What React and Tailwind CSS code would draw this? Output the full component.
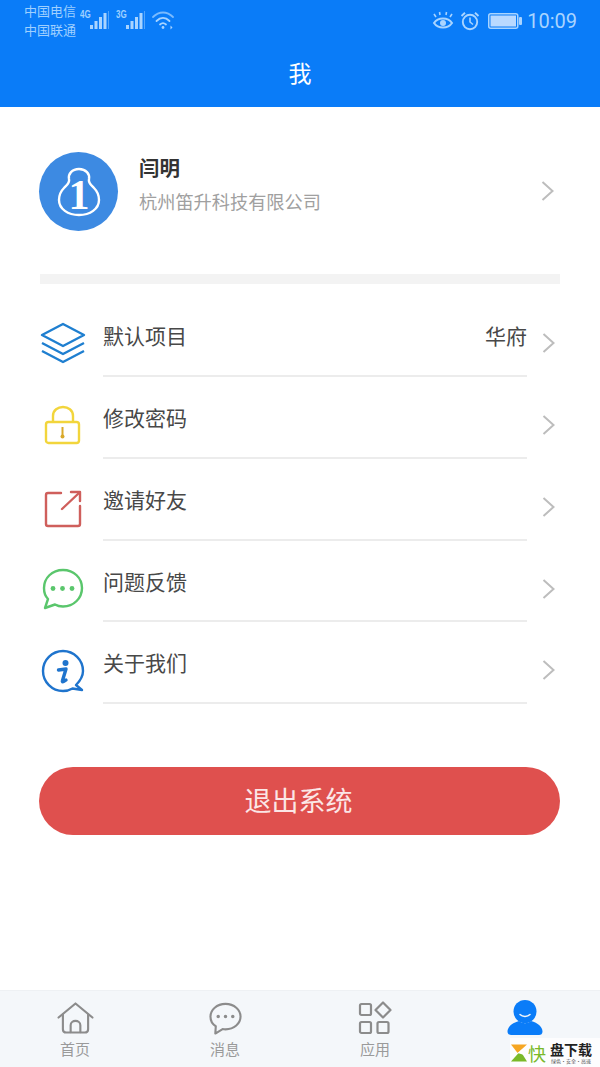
const cjk = { fontFamily: '"Noto Sans CJK SC", "Noto Sans", sans-serif' };

function Signal({ label }) {
  return (
    <div className="relative w-[30px] h-[30px]">
      <span className="absolute left-0 top-[10px] text-[10px] leading-[10px] font-bold text-[#9fd0ff]" style={{ fontFamily: '"Liberation Sans", sans-serif', transform: 'scaleX(0.8)', transformOrigin: 'left' }}>{label}</span>
      <svg className="absolute left-[10px] top-[11px]" width="20" height="20" viewBox="0 0 20 20" fill="#a9d4ff">
        <rect x="0" y="14" width="3" height="4" />
        <rect x="4.5" y="10" width="3" height="8" />
        <rect x="9" y="6" width="3" height="12" />
        <rect x="13.5" y="2" width="3" height="16" />
        <rect x="18" y="0" width="1" height="18" opacity="0.45" />
      </svg>
    </div>
  );
}

function StatusBar() {
  return (
    <div className="h-[42px] flex items-start justify-between pl-6 pr-[23px] text-[#9fd0ff]">
      <div className="flex items-start">
        <div className="text-[13px] leading-[19px] pt-[1px] w-[56px]">
          <div>中国电信</div>
          <div>中国联通</div>
        </div>
        <div className="flex gap-[6px]">
          <Signal label="4G" />
          <Signal label="3G" />
        </div>
        <svg className="ml-[5px] mt-[10px]" width="24" height="20" viewBox="0 0 24 20" fill="none" stroke="#a9d4ff" strokeWidth="1.8" strokeLinecap="round">
          <path d="M2 7C8 1 16 1 22 7" opacity="0.7" />
          <path d="M5.5 11C9.5 7 14.5 7 18.5 11" />
          <path d="M9 14.5C10.8 12.8 13.2 12.8 15 14.5" />
          <circle cx="12" cy="17.5" r="1.4" fill="#a9d4ff" stroke="none" />
          <path d="M19.5 15.5l2 2-2 2z" fill="#a9d4ff" stroke="none" />
        </svg>
      </div>
      <div className="flex items-center mt-[8px] h-[26px]">
        <svg width="22" height="20" viewBox="0 0 22 20" fill="none" stroke="#a9d4ff" strokeWidth="2">
          <path d="M2 12C6 6 16 6 20 12C16 18 6 18 2 12Z" />
          <circle cx="11" cy="12" r="3" fill="#a9d4ff" stroke="none" />
          <path d="M4 6L2 3M8 4L7.5 1M14 4L14.5 1M18 6L20 3" strokeWidth="1.6" />
        </svg>
        <svg className="ml-[6px]" width="20" height="20" viewBox="0 0 20 20" fill="none" stroke="#a9d4ff" strokeWidth="1.9">
          <circle cx="10" cy="11" r="7.2" />
          <path d="M10 6.5V11L13 13.5" strokeWidth="1.6" />
          <path d="M1.5 5L5 1.8M18.5 5L15 1.8" />
        </svg>
        <svg className="ml-[8px]" width="34" height="16" viewBox="0 0 34 16">
          <rect x="0.75" y="0.75" width="29" height="14.5" rx="2" fill="none" stroke="#a9d4ff" strokeWidth="1.5" />
          <rect x="2.5" y="2.5" width="25.5" height="11" fill="#b9d9ff" />
          <rect x="31" y="4" width="3" height="8" rx="1" fill="#a9d4ff" />
        </svg>
        <span className="ml-[5px] text-[20px] leading-none text-[#a9d4ff]" style={{ fontFamily: '"Roboto", sans-serif' }}>10:09</span>
      </div>
    </div>
  );
}

const Chevron = () => (
  <svg width="14" height="22" viewBox="0 0 14 22" fill="none" stroke="#bdbdbd" strokeWidth="2" className="shrink-0">
    <path d="M2.5 2L12.5 11L2.5 20" />
  </svg>
);

const LayersIcon = () => (
  <svg width="46" height="42" viewBox="0 0 46 42" fill="none" stroke="#1f7fd0" strokeWidth="2.4" strokeLinejoin="round">
    <path d="M23 2L44 13L23 24L2 13Z" />
    <path d="M2 21L23 32L44 21" />
    <path d="M2 29L23 40L44 29" />
  </svg>
);

const LockIcon = () => (
  <svg width="38" height="42" viewBox="0 0 38 42" fill="none" stroke="#f2d53c" strokeWidth="2.4">
    <path d="M9 18V12C9 0 29 0 29 12V18" />
    <rect x="2" y="18" width="33" height="21" rx="2.5" />
    <path d="M18.5 23V31" stroke="#d9a92a" strokeWidth="2" />
    <circle cx="18.5" cy="32.5" r="2" fill="#d9a92a" stroke="none" />
  </svg>
);

const ShareIcon = () => (
  <svg className="mt-[4px]" width="38" height="38" viewBox="0 0 38 38" fill="none" stroke="#cf5f5c" strokeWidth="2.4" strokeLinecap="round" strokeLinejoin="round">
    <path d="M17 3H4C2.5 3 2 3.5 2 5V34C2 35.5 2.5 36 4 36H34C35.5 36 36 35.5 36 34V16" />
    <path d="M18 19L35 3" />
    <path d="M27 2H36V11" />
  </svg>
);

const ChatIcon = () => (
  <svg width="42" height="42" viewBox="0 0 42 42" fill="none" stroke="#5ac66c" strokeWidth="2.4" strokeLinejoin="round">
    <path d="M21 2C10 2 2 10 2 20C2 25 4 29 6 31L3 40L13 36.5C15.5 38 18 38.5 21 38.5C32 38.5 40 30 40 20C40 10 32 2 21 2Z" />
    <circle cx="11" cy="20.5" r="2.4" fill="#5ac66c" stroke="none" />
    <circle cx="20.5" cy="20.5" r="2.4" fill="#5ac66c" stroke="none" />
    <circle cx="30" cy="20.5" r="2.4" fill="#5ac66c" stroke="none" />
  </svg>
);

const InfoIcon = () => (
  <svg width="44" height="44" viewBox="0 0 44 44" fill="none" stroke="#1f74cd" strokeWidth="2.4" strokeLinejoin="round">
    <path d="M35 36C39 32 42 27.5 42 22C42 11 33 2 22 2C11 2 2 11 2 22C2 33 11 42 22 42C26 42 29 41 31.5 39.5L41 41Z" />
    <circle cx="24.5" cy="14" r="3" fill="#1f74cd" stroke="none" />
    <path d="M17.5 21L25 20L21.5 31.5C21 33 22 33.5 25 31" strokeWidth="3.4" strokeLinecap="round" />
  </svg>
);

const rows = [
  { icon: <LayersIcon />, label: '默认项目', value: '华府', line: 'h-[82px]' },
  { icon: <LockIcon />, label: '修改密码', line: 'h-[82px]' },
  { icon: <ShareIcon />, label: '邀请好友', line: 'h-[82px]' },
  { icon: <ChatIcon />, label: '问题反馈', line: 'h-[81px]' },
  { icon: <InfoIcon />, label: '关于我们', line: 'h-[82px]' },
];

function Row({ icon, label, value, line }) {
  return (
    <div className={`flex ${line} pl-10 pr-[73px]`}>
      <div className="w-[63px] pt-[27px] flex justify-start h-full">
        <div className="w-[46px] flex justify-center items-start">{icon}</div>
      </div>
      <div className="flex-1 border-b-[2px] border-[#ececec] flex items-start pt-[25px] relative">
        <span className="text-[21px] leading-[30px] text-[#484848]">{label}</span>
        {value && <span className="ml-auto text-[21px] leading-[30px] text-[#484848]">{value}</span>}
        <div className="absolute right-[-28px] top-[37px]"><Chevron /></div>
      </div>
    </div>
  );
}

const Tab = ({ icon, label }) => (
  <div className="w-[150px] flex flex-col items-center pt-[9px]">
    <div className="h-[36px] flex items-center justify-center">{icon}</div>
    <span className="mt-[2px] text-[15px] leading-[22px] text-[#9a9a9a]">{label}</span>
  </div>
);

const gray = { fill: 'none', stroke: '#8c8c8c', strokeWidth: 2.2, strokeLinejoin: 'round', strokeLinecap: 'round' };

export default function App() {
  return (
    <div className="w-[600px] h-[1067px] bg-white flex flex-col overflow-hidden relative" style={cjk}>
      <header className="h-[107px] bg-[#0a7cf8] shrink-0">
        <StatusBar />
        <div className="h-[60px] flex items-center justify-center text-white text-[23px]">我</div>
      </header>

      <section className="h-[167px] flex pl-[39px] pr-[46px] pt-[45px] shrink-0">
        <div className="w-[79px] h-[79px] rounded-full bg-[#3d8ae2] flex items-center justify-center">
          <svg className="overflow-visible" width="44" height="50" viewBox="0 0 44 50" fill="none">
            <path d="M22 2C15 2 11 7 12 12C13 16 10 18 7 21C3 25 2 29 2 33C2 42 11 48 22 48C33 48 42 42 42 33C42 29 41 25 37 21C34 18 31 16 32 12C33 7 29 2 22 2Z" stroke="white" strokeWidth="2.4" />
            <text x="22" y="42" textAnchor="middle" fontSize="42" fontWeight="700" fill="white" style={{ fontFamily: '"Liberation Serif", serif' }}>1</text>
          </svg>
        </div>
        <div className="ml-[21px] flex-1">
          <div className="text-[20.5px] leading-[30px] font-bold text-[#333]">闫明</div>
          <div className="mt-[5px] text-[18.2px] leading-[28px] text-[#a0a0a0]">杭州笛升科技有限公司</div>
        </div>
        <div className="mt-[28px]"><Chevron /></div>
      </section>

      <div className="mx-10 h-[10px] bg-[#f3f3f3] shrink-0" />
      <div className="h-[11px] shrink-0" />

      <div className="shrink-0">
        {rows.map((r) => <Row key={r.label} {...r} />)}
      </div>

      <div className="ml-[39px] mr-10 mt-[63px] h-[68px] pb-[2px] pr-[2px] rounded-full bg-[#df504e] flex items-center justify-center text-[27px] text-[#fbe6e6] shrink-0">
        退出系统
      </div>

      <nav className="mt-auto h-[77px] bg-[#f4f7fa] border-t border-[#eef1f4] flex shrink-0">
        <Tab label="首页" icon={
          <svg width="37" height="32" viewBox="0 0 38 33" {...gray}>
            <path d="M1.5 16L19 1.5L36.5 16" />
            <path d="M6 13V28C6 30 7.5 31.5 9.5 31.5H28.5C30.5 31.5 32 30 32 28V13" />
            <path d="M14 31V24C14 18 24 18 24 24V31" />
          </svg>
        } />
        <Tab label="消息" icon={
          <svg width="33" height="33" viewBox="0 0 34 34" {...gray}>
            <path d="M17 2C8 2 1.5 8 1.5 15C1.5 20 4.5 23.5 7 25L6.5 32.5L14 28C15 28 16 28.2 17 28.2C26 28.2 32.5 22 32.5 15C32.5 8 26 2 17 2Z" />
            <circle cx="9.5" cy="15" r="1.8" fill="#8c8c8c" stroke="none" />
            <circle cx="17" cy="15" r="1.8" fill="#8c8c8c" stroke="none" />
            <circle cx="24.5" cy="15" r="1.8" fill="#8c8c8c" stroke="none" />
          </svg>
        } />
        <Tab label="应用" icon={
          <svg width="34" height="34" viewBox="0 0 34 34" {...gray}>
            <rect x="2" y="3" width="11" height="11" rx="1.5" />
            <path d="M25 1.5L32.5 9L25 16.5L17.5 9Z" />
            <rect x="2" y="21" width="11" height="11" rx="1.5" />
            <rect x="19.5" y="21" width="11" height="11" rx="1.5" />
          </svg>
        } />
        <Tab icon={
          <svg width="36" height="36" viewBox="0 0 36 36" fill="#0a7cf8">
            <circle cx="18" cy="11.5" r="11.5" />
            <path d="M13 14.5C15.5 17 20.5 17 23 14.5" fill="none" stroke="#f4f7fa" strokeWidth="1.5" strokeLinecap="round" />
            <path d="M12 21C5 23 0.5 27 0.5 31.5C0.5 34 2 35 4 35H32C34 35 35.5 34 35.5 31.5C35.5 27 31 23 24 21C20 24 16 24 12 21Z" />
          </svg>
        } />
      </nav>

      <div className="absolute left-[510px] top-[1038px] w-[90px] h-[29px] bg-white/80 flex items-center">
        <svg width="16" height="20" viewBox="0 0 17 20" className="ml-[1px] shrink-0">
          <path d="M0 1H17L7 10Z" fill="#f6a623" />
          <path d="M0 19L10 8L17 19Z" fill="#7ab929" />
          <path d="M7 10L12 6L14 12Z" fill="#fff" />
        </svg>
        <span className="text-[18px] leading-none text-[#7ab929] ml-[1px]">快</span>
        <div className="ml-[4px] flex flex-col items-center">
          <span className="text-[14px] leading-[15px] font-bold text-[#222] whitespace-nowrap">盘下载</span>
          <span className="text-[5px] leading-[7px] text-[#555] whitespace-nowrap">绿色·安全·高速</span>
        </div>
      </div>
    </div>
  );
}
